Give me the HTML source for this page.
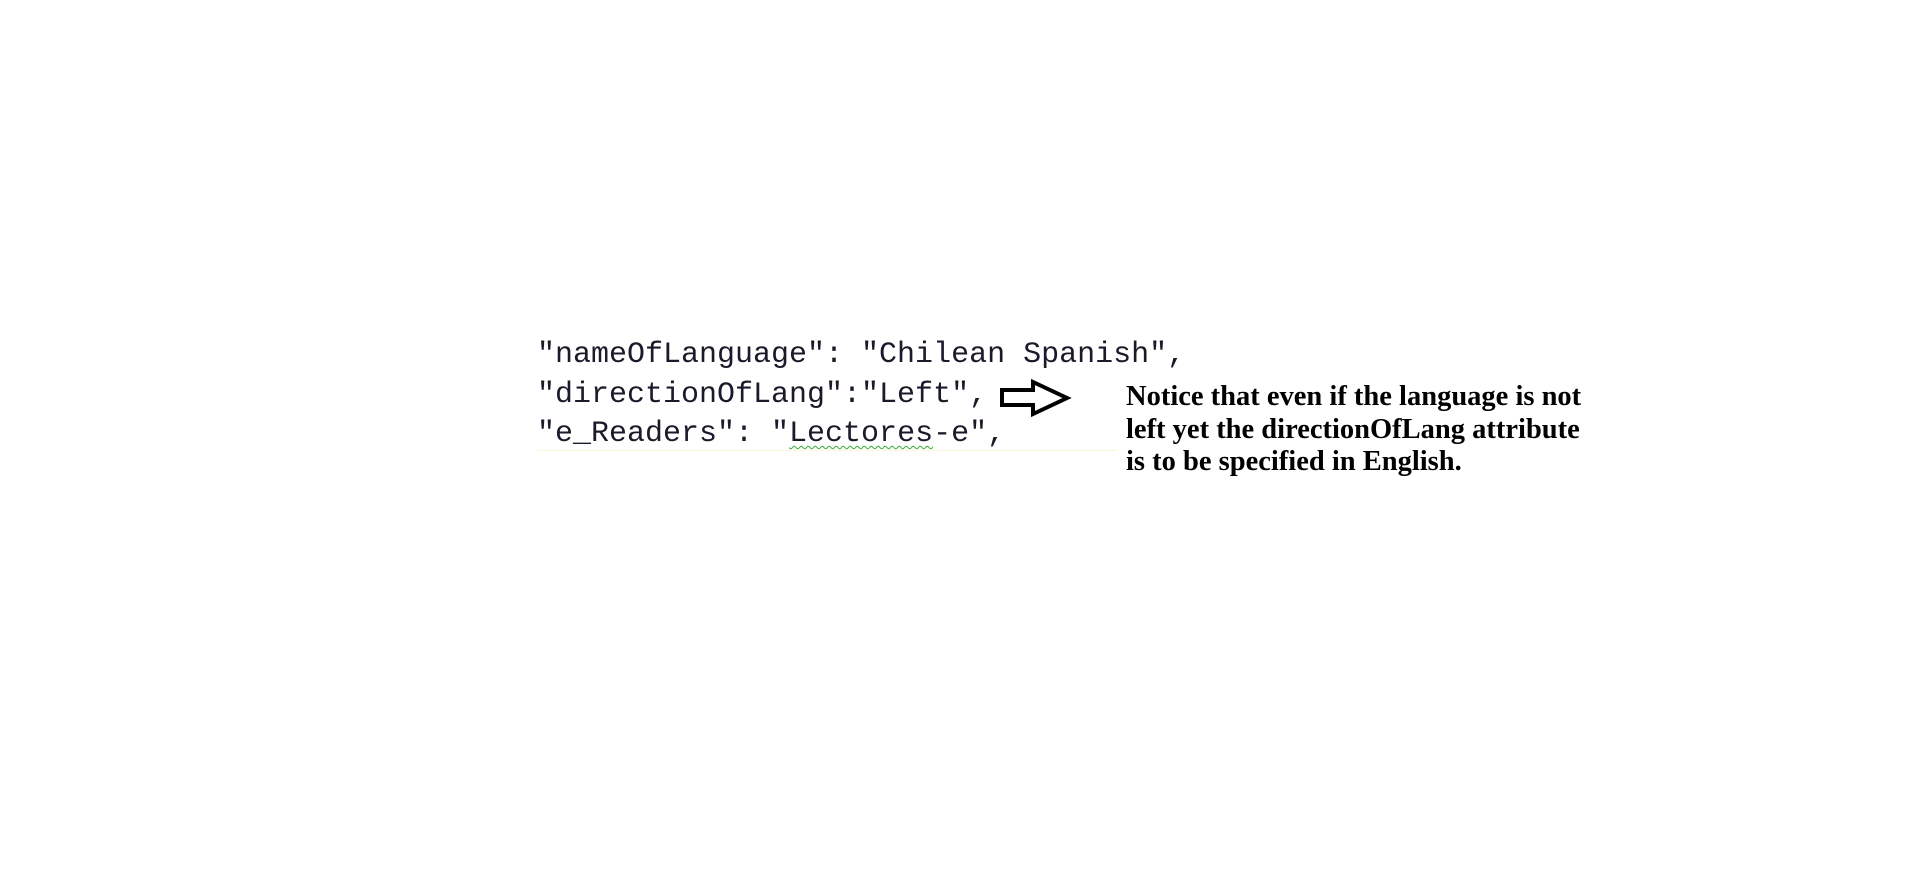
<!DOCTYPE html>
<html><head><meta charset="utf-8"><style>
html,body{margin:0;padding:0;background:#fff;width:1914px;height:883px;overflow:hidden;position:relative}
.code{position:absolute;left:537px;font-family:"Liberation Mono",monospace;font-size:30px;color:#1a1a2a;white-space:pre;line-height:30px}
.note{position:absolute;left:1126px;top:381px;font-family:"Liberation Serif",serif;font-weight:bold;font-size:28.5px;line-height:32.5px;color:#000;white-space:nowrap}
.sq{text-decoration:underline wavy #3a3;text-decoration-thickness:1px;text-underline-offset:4px}
</style></head><body>
<div class="code" style="top:340px">"nameOfLanguage": "Chilean Spanish",</div>
<div class="code" style="top:380px">"directionOfLang":"Left",</div>
<div class="code" style="top:419px">"e_Readers": "<span class="sq">Lectores</span>-e",</div>
<div style="position:absolute;left:537px;top:450px;width:580px;height:1px;background:#fbf6d8"></div>
<svg style="position:absolute;left:0;top:0" width="1914" height="883">
<path d="M1002 390 L1033 390 L1033 382 L1067 398 L1033 414 L1033 405 L1002 405 Z" fill="none" stroke="#000" stroke-width="4" stroke-linejoin="miter"/>
</svg>
<div class="note">Notice that even if the language is not<br>left yet the directionOfLang attribute<br>is to be specified in English.</div>
</body></html>
